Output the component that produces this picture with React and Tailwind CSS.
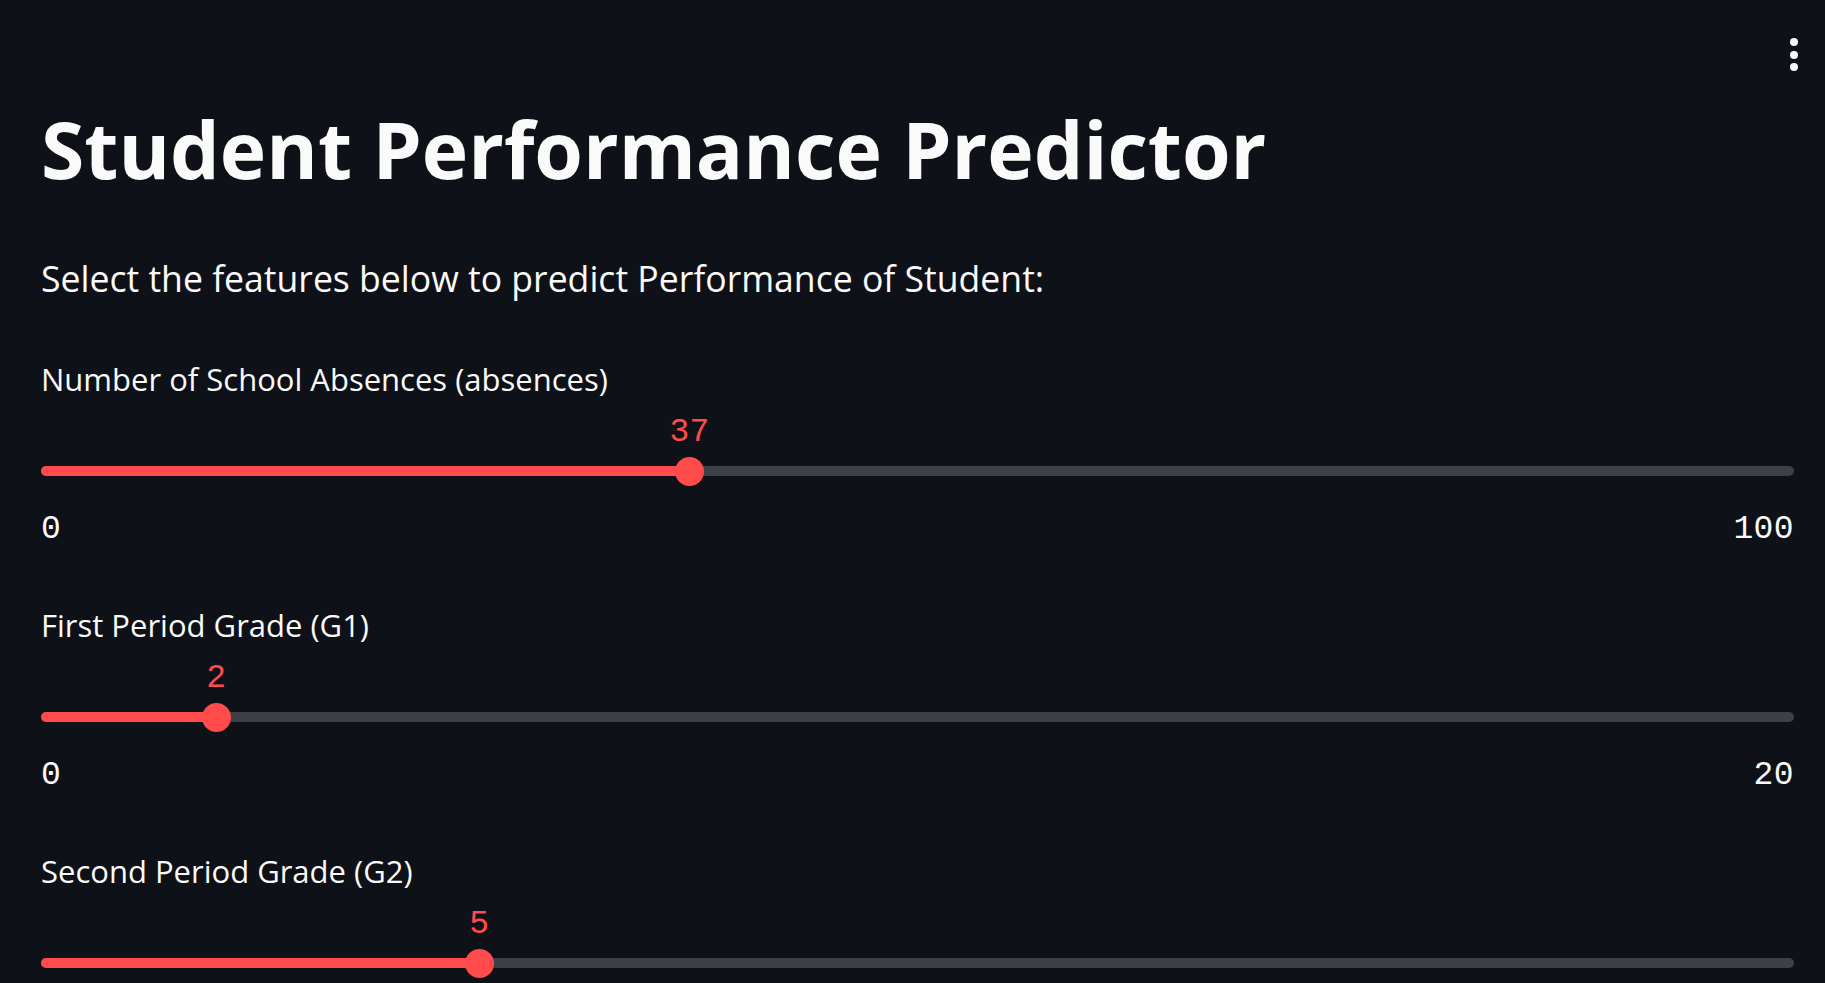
import React from 'react';

const sliders = [
  { label: 'Number of School Absences (absences)', value: 37, min: 0, max: 100 },
  { label: 'First Period Grade (G1)', value: 2, min: 0, max: 20 },
  { label: 'Second Period Grade (G2)', value: 5, min: 0, max: 20 },
];

const sans = "font-['Open_Sans','Noto_Sans',sans-serif]";
const mono = "font-['Liberation_Mono','DejaVu_Sans_Mono',monospace]";

const Slider = ({ label, value, min, max }) => {
  const pct = ((value - min) / (max - min)) * 100;

  return (
    <div className="mb-[57px]">
      <div className={`${sans} h-[40px] text-[31px] leading-[40px] text-[#fafafa]`}>{label}</div>

      {/* value above thumb */}
      <div className="relative mt-[16px] h-[36px]">
        <span
          className={`${mono} absolute top-0 -translate-x-1/2 text-[33px] leading-[36px] tracking-[0.4px] text-[#ff4b4b]`}
          style={{ left: `${pct}%` }}
        >
          {value}
        </span>
      </div>

      {/* track */}
      <div className="relative mt-[5px] flex h-[30px] items-center">
        <div className="h-[10px] w-full rounded-full bg-[#3d4047]"></div>
        <div
          className="absolute left-0 h-[10px] rounded-full bg-[#ff4b4b]"
          style={{ width: `${pct}%` }}
        ></div>
        <div
          className="absolute top-[0.5px] h-[29px] w-[29px] rounded-full bg-[#ff4b4b]"
          style={{ left: `calc(${pct}% - 14.5px)` }}
        ></div>
      </div>

      <div className={`${mono} mt-[26px] flex h-[36px] justify-between text-[33px] leading-[36px] tracking-[0.4px] text-[#fafafa]`}>
        <span>{min}</span>
        <span>{max}</span>
      </div>
    </div>
  );
};

export default function App() {
  return (
    <div className="relative h-screen overflow-hidden bg-[#0e1117] pl-[41px] pr-[31px] pt-[110px]">
      {/* header menu */}
      <div className="absolute right-[27px] top-[38px] flex flex-col gap-[4.5px]">
        <span className="h-[8px] w-[8px] rounded-full bg-[#fafafa]"></span>
        <span className="h-[8px] w-[8px] rounded-full bg-[#fafafa]"></span>
        <span className="h-[8px] w-[8px] rounded-full bg-[#fafafa]"></span>
      </div>

      <h1 className={`${sans} h-[77px] text-[78.6px] font-bold leading-[77px] text-[#fafafa]`}>
        Student Performance Predictor
      </h1>

      <p className={`${sans} mt-[71px] h-[40px] text-[35.6px] leading-[40px] text-[#fafafa]`}>
        Select the features below to predict Performance of Student:
      </p>

      <div className="mt-[61px]">
        {sliders.map((s) => (
          <Slider key={s.label} {...s} />
        ))}
      </div>
    </div>
  );
}
